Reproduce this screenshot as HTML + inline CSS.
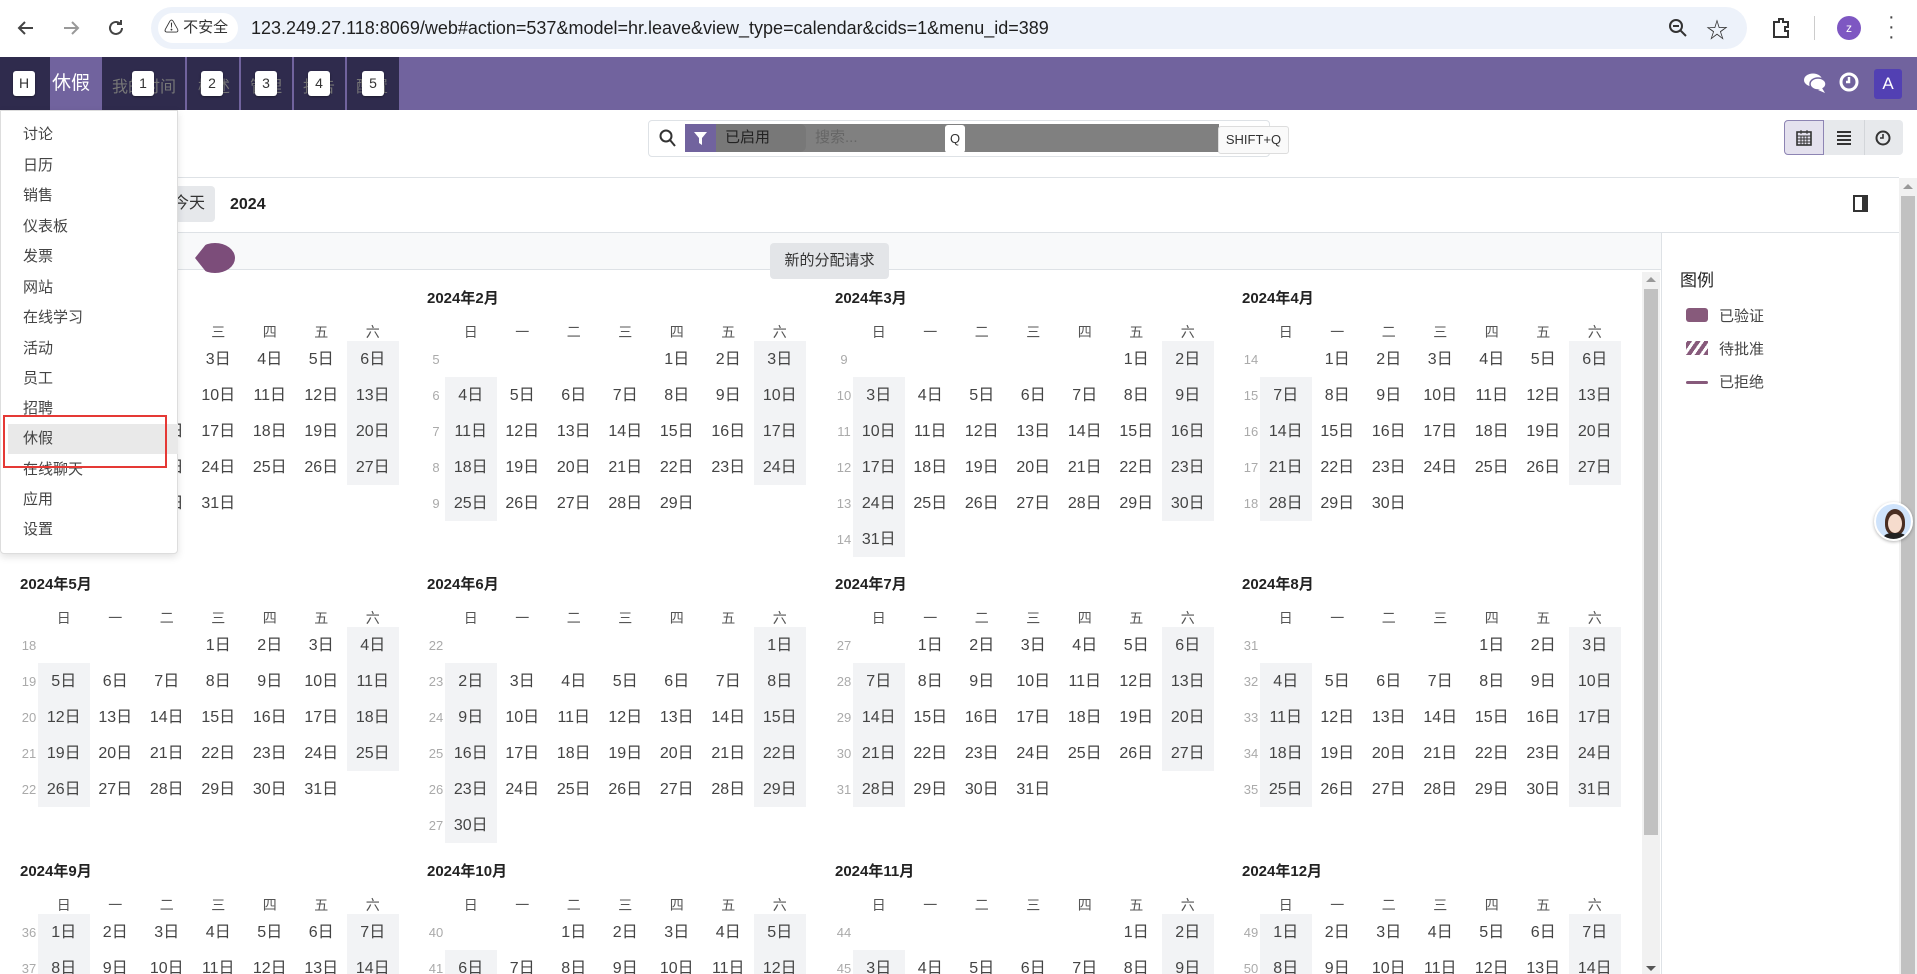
<!DOCTYPE html>
<html><head><meta charset="utf-8"><style>
*{box-sizing:border-box;margin:0;padding:0}
body{width:1917px;height:974px;overflow:hidden;position:relative;background:#fff;font-family:"Liberation Sans","Noto Sans CJK SC",sans-serif;color:#333}
.a{position:absolute}
.chrome{left:0;top:0;width:1917px;height:57px;background:#fff}
.url{left:151px;top:7px;width:1596px;height:42px;border-radius:21px;background:#edf2fa}
.nav{left:0;top:57px;width:1917px;height:53px;background:#71639e}
.dk{background:#2f2b4d;top:0;height:53px}
.kb{background:#fff;color:#333;border-radius:3px;font-size:14px;text-align:center;line-height:25px;width:22px;height:25px;top:14px;box-shadow:0 1px 2px rgba(0,0,0,.4)}
.menu{left:0;top:110px;width:178px;height:444px;background:#fff;border:1px solid #ddd;border-radius:0 0 4px 4px;box-shadow:0 3px 8px rgba(0,0,0,.12);z-index:5}
.menu div{position:absolute;left:22px;font-size:15px;color:#444;line-height:20px}
.clip{left:0;top:270px;width:1641px;height:704px;overflow:hidden}
.m{position:absolute;width:380px}
.t{height:20px;line-height:22px;font-size:15px;font-weight:bold;color:#222}
.h,.g{display:grid;grid-template-columns:18px repeat(7,51.5px)}
.h{margin-top:12px;height:21px;line-height:24px;font-size:14px;color:#555;text-align:center}
.g{grid-auto-rows:36px;line-height:38px;text-align:center;font-size:16px;color:#444}
.g i{font-style:normal;font-size:13px;color:#aaa}
.g b{font-weight:normal}
.g em{font-style:normal;background:#f2f3f5}
.g s{text-decoration:none}
.leg{font-size:15px;color:#444}
</style></head><body>
<div class="a chrome">
 <svg class="a" style="left:16px;top:18px" width="20" height="20" viewBox="0 0 20 20"><path d="M17 10H4M9 4l-6 6 6 6" stroke="#444" stroke-width="2" fill="none"/></svg>
 <svg class="a" style="left:61px;top:18px" width="20" height="20" viewBox="0 0 20 20"><path d="M3 10h13M11 4l6 6-6 6" stroke="#999" stroke-width="2" fill="none"/></svg>
 <svg class="a" style="left:106px;top:18px" width="20" height="20" viewBox="0 0 20 20"><path d="M16 10a6 6 0 1 1-2-4.5M15 2v4h-4" stroke="#444" stroke-width="2" fill="none"/></svg>
 <div class="a url"></div>
 <div class="a" style="left:158px;top:13px;width:80px;height:30px;border-radius:15px;background:#fff;font-size:15px;line-height:30px;padding-left:6px;color:#333">⚠ 不安全</div>
 <div class="a" style="left:251px;top:15px;font-size:18px;color:#1f1f1f;line-height:26px">123.249.27.118:8069/web#action=537&amp;model=hr.leave&amp;view_type=calendar&amp;cids=1&amp;menu_id=389</div>
 <svg class="a" style="left:1667px;top:17px" width="22" height="22" viewBox="0 0 22 22"><circle cx="9" cy="9" r="6" stroke="#333" stroke-width="2" fill="none"/><path d="M13 13l6 6M6 9h6" stroke="#333" stroke-width="2"/></svg>
 <div class="a" style="left:1706px;top:13px;font-size:22px;color:#333">☆</div>
 <svg class="a" style="left:1770px;top:16px" width="22" height="24" viewBox="0 0 22 24"><path d="M4 6h5V3h4v3h5v5h-3v4h3v6H4z" stroke="#333" stroke-width="2" fill="none"/></svg>
 <div class="a" style="left:1814px;top:16px;width:1px;height:24px;background:#ccc"></div>
 <div class="a" style="left:1837px;top:16px;width:24px;height:24px;border-radius:50%;background:#7e57c2;color:#fff;font-size:12px;text-align:center;line-height:24px">z</div>
 <div class="a" style="left:1888px;top:12px;font-size:20px;color:#444;line-height:10px">·<br>·<br>·</div>
</div>
<div class="a nav">
 <div class="a dk" style="left:0;width:50px"></div>
 <div class="a kb" style="left:13px">H</div>
 <div class="a" style="left:52px;top:13px;color:#fff;font-size:19px;line-height:27px">休假</div>
 <div class="a dk" style="left:102px;width:83px"></div>
 <div class="a dk" style="left:187px;width:52px"></div>
 <div class="a dk" style="left:241px;width:51px"></div>
 <div class="a dk" style="left:294px;width:51px"></div>
 <div class="a dk" style="left:347px;width:52px"></div>
 <div class="a" style="left:112px;top:16px;color:#777;font-size:16px">我的时间</div>
 <div class="a" style="left:198px;top:16px;color:#777;font-size:16px">概述</div>
 <div class="a" style="left:250px;top:16px;color:#777;font-size:16px">管理</div>
 <div class="a" style="left:303px;top:16px;color:#777;font-size:16px">报告</div>
 <div class="a" style="left:356px;top:16px;color:#777;font-size:16px">配置</div>
 <div class="a kb" style="left:132px">1</div>
 <div class="a kb" style="left:201px">2</div>
 <div class="a kb" style="left:255px">3</div>
 <div class="a kb" style="left:308px">4</div>
 <div class="a kb" style="left:362px">5</div>
 <svg class="a" style="left:1803px;top:15px" width="24" height="22" viewBox="0 0 24 22"><ellipse cx="10" cy="8" rx="9" ry="6.5" fill="#fff"/><ellipse cx="15" cy="12" rx="8" ry="6" fill="#fff" stroke="#71639e" stroke-width="1.5"/><path d="M19 16l3 5-7-3z" fill="#fff"/></svg>
 <svg class="a" style="left:1838px;top:14px" width="22" height="22" viewBox="0 0 22 22"><circle cx="11" cy="11" r="8" stroke="#fff" stroke-width="3" fill="none"/><path d="M11 6v5h-3" stroke="#fff" stroke-width="2.5" fill="none"/></svg>
 <div class="a" style="left:1874px;top:12px;width:28px;height:30px;background:#5240b3;border-radius:3px;color:#fff;font-size:17px;text-align:center;line-height:30px">A</div>
</div>
<!-- search -->
<div class="a" style="left:648px;top:120px;width:622px;height:37px;border:1px solid #dee2e6;border-radius:4px;background:#fff"></div>
<svg class="a" style="left:659px;top:128px" width="18" height="20" viewBox="0 0 18 20"><circle cx="7" cy="8" r="5.5" stroke="#333" stroke-width="2" fill="none"/><path d="M11 12l5 6" stroke="#333" stroke-width="2"/></svg>
<div class="a" style="left:685px;top:124px;width:534px;height:28px;background:#808080"></div>
<div class="a" style="left:685px;top:124px;width:31px;height:28px;background:#71639e"></div>
<svg class="a" style="left:693px;top:131px" width="15" height="15" viewBox="0 0 15 15"><path d="M1 1h13l-5 6v7l-3-2V7z" fill="#fff"/></svg>
<div class="a" style="left:716px;top:124px;width:90px;height:28px;background:#787878;border-radius:0 6px 6px 0"></div>
<div class="a" style="left:725px;top:124px;font-size:15px;line-height:28px;color:#222">已启用</div>
<div class="a" style="left:815px;top:124px;font-size:15px;line-height:28px;color:#666">搜索...</div>
<div class="a" style="left:945px;top:125px;width:20px;height:28px;background:#fff;border-radius:3px;font-size:13px;text-align:center;line-height:28px;color:#333">Q</div>
<div class="a" style="left:1218px;top:126px;width:71px;height:28px;background:#fafafa;border:1px solid #ddd;border-radius:3px;font-size:13px;text-align:center;line-height:26px;color:#333">SHIFT+Q</div>
<div class="a" style="left:1784px;top:120px;width:40px;height:35px;background:#e4e1ee;border:1px solid #8d84b3;border-radius:4px 0 0 4px"></div>
<div class="a" style="left:1824px;top:120px;width:79px;height:35px;background:#e7e9ec;border-radius:0 4px 4px 0"></div>
<div class="a" style="left:1864px;top:120px;width:1px;height:35px;background:#d3d6da"></div>
<svg class="a" style="left:1795px;top:129px" width="18" height="18" viewBox="0 0 18 18"><rect x="2" y="3" width="14" height="13" stroke="#333" stroke-width="1.6" fill="none"/><path d="M2 7h14M6 1v4M12 1v4M2 10h14M2 13h14M6 7v9M9 7v9M12 7v9" stroke="#333" stroke-width="1"/></svg>
<svg class="a" style="left:1835px;top:129px" width="18" height="18" viewBox="0 0 18 18"><path d="M2 3h14M2 7h14M2 11h14M2 15h14" stroke="#333" stroke-width="2"/></svg>
<svg class="a" style="left:1874px;top:129px" width="18" height="18" viewBox="0 0 18 18"><circle cx="9" cy="9" r="6.5" stroke="#333" stroke-width="2" fill="none"/><path d="M9 5v4H6" stroke="#333" stroke-width="1.6" fill="none"/></svg>
<div class="a" style="left:0;top:177px;width:1899px;height:1px;background:#dee2e6"></div>
<!-- toolbar -->
<div class="a" style="left:165px;top:186px;width:50px;height:36px;background:#e6e8eb;border-radius:4px;font-size:16px;line-height:36px;padding-left:8px;color:#333">今天</div>
<div class="a" style="left:230px;top:193px;font-size:16px;font-weight:bold;line-height:24px;color:#222">2024</div>
<div class="a" style="left:1853px;top:195px;width:15px;height:17px;border:2px solid #333;border-right-width:6px"></div>
<div class="a" style="left:0;top:232px;width:1899px;height:1px;background:#dee2e6"></div>
<div class="a" style="left:0;top:233px;width:1661px;height:37px;background:#f8f9fa;border-bottom:1px solid #dee2e6"></div>
<div class="a" style="left:195px;top:243px;width:40px;height:30px;background:#7c4d7a;border-radius:50%;clip-path:polygon(0 50%,30% 0,100% 0,100% 100%,30% 100%)"></div>
<div class="a" style="left:770px;top:243px;width:119px;height:36px;background:#e3e5e8;border-radius:4px;font-size:15px;text-align:center;line-height:36px;color:#333">新的分配请求</div>
<!-- right panel -->
<div class="a" style="left:1661px;top:233px;width:1px;height:741px;background:#dee2e6"></div>
<div class="a" style="left:1680px;top:269px;font-size:17px;line-height:24px;color:#222">图例</div>
<div class="a" style="left:1686px;top:308px;width:22px;height:14px;background:#875a7b;border-radius:3px"></div>
<div class="a leg" style="left:1719px;top:305px">已验证</div>
<div class="a" style="left:1686px;top:341px;width:22px;height:14px;background:repeating-linear-gradient(-55deg,#875a7b 0 4px,#fff 4px 7px)"></div>
<div class="a leg" style="left:1719px;top:338px">待批准</div>
<div class="a" style="left:1686px;top:381px;width:22px;height:3px;background:#875a7b;border-radius:2px"></div>
<div class="a leg" style="left:1719px;top:371px">已拒绝</div>
<!-- scrollbars -->
<div class="a" style="left:1642px;top:272px;width:18px;height:702px;background:#f1f1f1"></div>
<div class="a" style="left:1644px;top:289px;width:14px;height:546px;background:#c1c1c1"></div>
<div class="a" style="left:1646px;top:277px;width:0;height:0;border:5px solid transparent;border-bottom-color:#999;border-top:0"></div>
<div class="a" style="left:1646px;top:966px;width:0;height:0;border:5px solid transparent;border-top-color:#555;border-bottom:0"></div>
<div class="a" style="left:1899px;top:178px;width:18px;height:796px;background:#f1f1f1"></div>
<div class="a" style="left:1901px;top:196px;width:14px;height:778px;background:#c1c1c1"></div>
<div class="a" style="left:1903px;top:184px;width:0;height:0;border:5px solid transparent;border-bottom-color:#999;border-top:0"></div>
<div class="a" style="left:1874px;top:502px;width:39px;height:39px;border-radius:50%;background:#cfe3fb;border:2px solid #fff;box-shadow:0 1px 3px rgba(0,0,0,.3);overflow:hidden;z-index:3">
 <div class="a" style="left:9px;top:5px;width:20px;height:26px;border-radius:50% 50% 40% 40%;background:#4a2e22"></div>
 <div class="a" style="left:12px;top:10px;width:14px;height:19px;border-radius:50%;background:#f6dccd"></div>
 <div class="a" style="left:8px;top:29px;width:22px;height:10px;border-radius:40% 40% 0 0;background:#222"></div>
</div>
<!-- calendar -->
<div class="a clip">
<div class="m" style="left:20px;top:18px"><div class="t">2024年1月</div><div class="h"><span></span><span>日</span><span>一</span><span>二</span><span>三</span><span>四</span><span>五</span><span>六</span></div><div class="g">
<i>1</i><s></s><b>1日</b><b>2日</b><b>3日</b><b>4日</b><b>5日</b><em>6日</em>
<i>2</i><em>7日</em><b>8日</b><b>9日</b><b>10日</b><b>11日</b><b>12日</b><em>13日</em>
<i>3</i><em>14日</em><b>15日</b><b>16日</b><b>17日</b><b>18日</b><b>19日</b><em>20日</em>
<i>4</i><em>21日</em><b>22日</b><b>23日</b><b>24日</b><b>25日</b><b>26日</b><em>27日</em>
<i>5</i><em>28日</em><b>29日</b><b>30日</b><b>31日</b></div></div>
<div class="m" style="left:427px;top:18px"><div class="t">2024年2月</div><div class="h"><span></span><span>日</span><span>一</span><span>二</span><span>三</span><span>四</span><span>五</span><span>六</span></div><div class="g">
<i>5</i><s></s><s></s><s></s><s></s><b>1日</b><b>2日</b><em>3日</em>
<i>6</i><em>4日</em><b>5日</b><b>6日</b><b>7日</b><b>8日</b><b>9日</b><em>10日</em>
<i>7</i><em>11日</em><b>12日</b><b>13日</b><b>14日</b><b>15日</b><b>16日</b><em>17日</em>
<i>8</i><em>18日</em><b>19日</b><b>20日</b><b>21日</b><b>22日</b><b>23日</b><em>24日</em>
<i>9</i><em>25日</em><b>26日</b><b>27日</b><b>28日</b><b>29日</b></div></div>
<div class="m" style="left:835px;top:18px"><div class="t">2024年3月</div><div class="h"><span></span><span>日</span><span>一</span><span>二</span><span>三</span><span>四</span><span>五</span><span>六</span></div><div class="g">
<i>9</i><s></s><s></s><s></s><s></s><s></s><b>1日</b><em>2日</em>
<i>10</i><em>3日</em><b>4日</b><b>5日</b><b>6日</b><b>7日</b><b>8日</b><em>9日</em>
<i>11</i><em>10日</em><b>11日</b><b>12日</b><b>13日</b><b>14日</b><b>15日</b><em>16日</em>
<i>12</i><em>17日</em><b>18日</b><b>19日</b><b>20日</b><b>21日</b><b>22日</b><em>23日</em>
<i>13</i><em>24日</em><b>25日</b><b>26日</b><b>27日</b><b>28日</b><b>29日</b><em>30日</em>
<i>14</i><em>31日</em></div></div>
<div class="m" style="left:1242px;top:18px"><div class="t">2024年4月</div><div class="h"><span></span><span>日</span><span>一</span><span>二</span><span>三</span><span>四</span><span>五</span><span>六</span></div><div class="g">
<i>14</i><s></s><b>1日</b><b>2日</b><b>3日</b><b>4日</b><b>5日</b><em>6日</em>
<i>15</i><em>7日</em><b>8日</b><b>9日</b><b>10日</b><b>11日</b><b>12日</b><em>13日</em>
<i>16</i><em>14日</em><b>15日</b><b>16日</b><b>17日</b><b>18日</b><b>19日</b><em>20日</em>
<i>17</i><em>21日</em><b>22日</b><b>23日</b><b>24日</b><b>25日</b><b>26日</b><em>27日</em>
<i>18</i><em>28日</em><b>29日</b><b>30日</b></div></div>

<div class="m" style="left:20px;top:304px"><div class="t">2024年5月</div><div class="h"><span></span><span>日</span><span>一</span><span>二</span><span>三</span><span>四</span><span>五</span><span>六</span></div><div class="g">
<i>18</i><s></s><s></s><s></s><b>1日</b><b>2日</b><b>3日</b><em>4日</em>
<i>19</i><em>5日</em><b>6日</b><b>7日</b><b>8日</b><b>9日</b><b>10日</b><em>11日</em>
<i>20</i><em>12日</em><b>13日</b><b>14日</b><b>15日</b><b>16日</b><b>17日</b><em>18日</em>
<i>21</i><em>19日</em><b>20日</b><b>21日</b><b>22日</b><b>23日</b><b>24日</b><em>25日</em>
<i>22</i><em>26日</em><b>27日</b><b>28日</b><b>29日</b><b>30日</b><b>31日</b></div></div>
<div class="m" style="left:427px;top:304px"><div class="t">2024年6月</div><div class="h"><span></span><span>日</span><span>一</span><span>二</span><span>三</span><span>四</span><span>五</span><span>六</span></div><div class="g">
<i>22</i><s></s><s></s><s></s><s></s><s></s><s></s><em>1日</em>
<i>23</i><em>2日</em><b>3日</b><b>4日</b><b>5日</b><b>6日</b><b>7日</b><em>8日</em>
<i>24</i><em>9日</em><b>10日</b><b>11日</b><b>12日</b><b>13日</b><b>14日</b><em>15日</em>
<i>25</i><em>16日</em><b>17日</b><b>18日</b><b>19日</b><b>20日</b><b>21日</b><em>22日</em>
<i>26</i><em>23日</em><b>24日</b><b>25日</b><b>26日</b><b>27日</b><b>28日</b><em>29日</em>
<i>27</i><em>30日</em></div></div>
<div class="m" style="left:835px;top:304px"><div class="t">2024年7月</div><div class="h"><span></span><span>日</span><span>一</span><span>二</span><span>三</span><span>四</span><span>五</span><span>六</span></div><div class="g">
<i>27</i><s></s><b>1日</b><b>2日</b><b>3日</b><b>4日</b><b>5日</b><em>6日</em>
<i>28</i><em>7日</em><b>8日</b><b>9日</b><b>10日</b><b>11日</b><b>12日</b><em>13日</em>
<i>29</i><em>14日</em><b>15日</b><b>16日</b><b>17日</b><b>18日</b><b>19日</b><em>20日</em>
<i>30</i><em>21日</em><b>22日</b><b>23日</b><b>24日</b><b>25日</b><b>26日</b><em>27日</em>
<i>31</i><em>28日</em><b>29日</b><b>30日</b><b>31日</b></div></div>
<div class="m" style="left:1242px;top:304px"><div class="t">2024年8月</div><div class="h"><span></span><span>日</span><span>一</span><span>二</span><span>三</span><span>四</span><span>五</span><span>六</span></div><div class="g">
<i>31</i><s></s><s></s><s></s><s></s><b>1日</b><b>2日</b><em>3日</em>
<i>32</i><em>4日</em><b>5日</b><b>6日</b><b>7日</b><b>8日</b><b>9日</b><em>10日</em>
<i>33</i><em>11日</em><b>12日</b><b>13日</b><b>14日</b><b>15日</b><b>16日</b><em>17日</em>
<i>34</i><em>18日</em><b>19日</b><b>20日</b><b>21日</b><b>22日</b><b>23日</b><em>24日</em>
<i>35</i><em>25日</em><b>26日</b><b>27日</b><b>28日</b><b>29日</b><b>30日</b><em>31日</em></div></div>

<div class="m" style="left:20px;top:591px"><div class="t">2024年9月</div><div class="h"><span></span><span>日</span><span>一</span><span>二</span><span>三</span><span>四</span><span>五</span><span>六</span></div><div class="g">
<i>36</i><em>1日</em><b>2日</b><b>3日</b><b>4日</b><b>5日</b><b>6日</b><em>7日</em>
<i>37</i><em>8日</em><b>9日</b><b>10日</b><b>11日</b><b>12日</b><b>13日</b><em>14日</em></div></div>
<div class="m" style="left:427px;top:591px"><div class="t">2024年10月</div><div class="h"><span></span><span>日</span><span>一</span><span>二</span><span>三</span><span>四</span><span>五</span><span>六</span></div><div class="g">
<i>40</i><s></s><s></s><b>1日</b><b>2日</b><b>3日</b><b>4日</b><em>5日</em>
<i>41</i><em>6日</em><b>7日</b><b>8日</b><b>9日</b><b>10日</b><b>11日</b><em>12日</em></div></div>
<div class="m" style="left:835px;top:591px"><div class="t">2024年11月</div><div class="h"><span></span><span>日</span><span>一</span><span>二</span><span>三</span><span>四</span><span>五</span><span>六</span></div><div class="g">
<i>44</i><s></s><s></s><s></s><s></s><s></s><b>1日</b><em>2日</em>
<i>45</i><em>3日</em><b>4日</b><b>5日</b><b>6日</b><b>7日</b><b>8日</b><em>9日</em></div></div>
<div class="m" style="left:1242px;top:591px"><div class="t">2024年12月</div><div class="h"><span></span><span>日</span><span>一</span><span>二</span><span>三</span><span>四</span><span>五</span><span>六</span></div><div class="g">
<i>49</i><em>1日</em><b>2日</b><b>3日</b><b>4日</b><b>5日</b><b>6日</b><em>7日</em>
<i>50</i><em>8日</em><b>9日</b><b>10日</b><b>11日</b><b>12日</b><b>13日</b><em>14日</em></div></div>
</div>
<!-- dropdown menu -->
<div class="a menu">
 <div style="top:14px">讨论</div><div style="top:45px">日历</div><div style="top:75px">销售</div><div style="top:106px">仪表板</div><div style="top:136px">发票</div><div style="top:167px">网站</div><div style="top:197px">在线学习</div><div style="top:228px">活动</div><div style="top:258px">员工</div><div style="top:288px">招聘</div>
 <span class="a" style="left:7px;top:313px;width:170px;height:30px;background:#e9e9e9"></span>
 <div style="top:318px">休假</div><div style="top:349px">在线聊天</div><div style="top:379px">应用</div><div style="top:409px">设置</div>
</div>
<div class="a" style="left:3px;top:415px;width:164px;height:53px;border:2px solid #e53935;z-index:6"></div>
</body></html>
